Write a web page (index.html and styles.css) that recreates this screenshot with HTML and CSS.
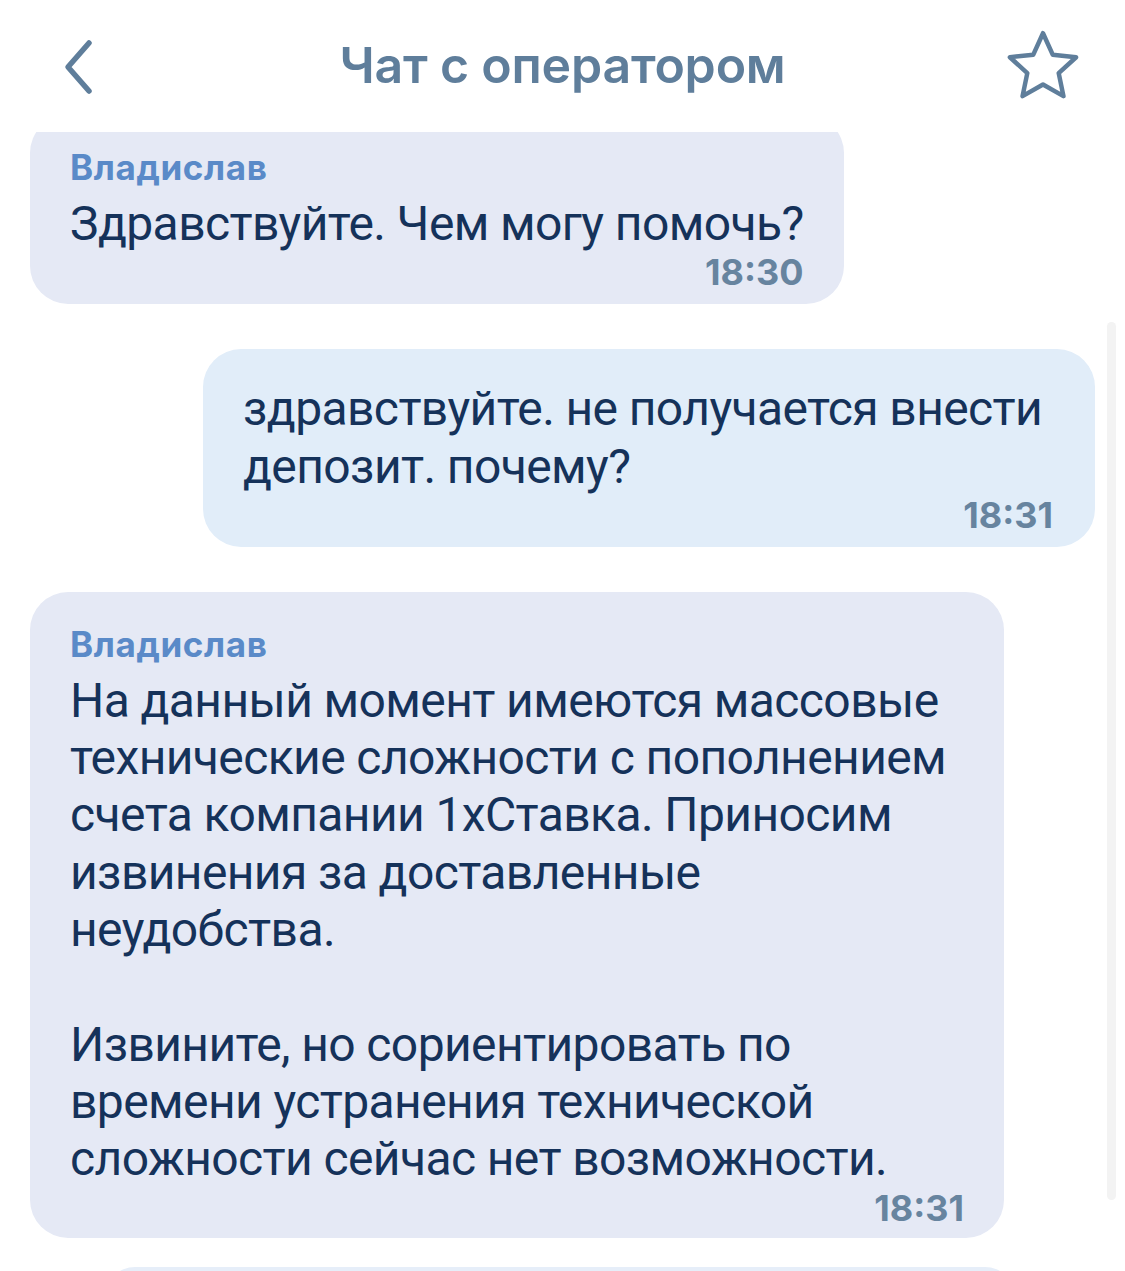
FILE: index.html
```html
<!DOCTYPE html>
<html lang="ru">
<head>
<meta charset="utf-8">
<title>Чат с оператором</title>
<link rel="stylesheet" href="styles.css">
</head>
<body>
<div class="screen">
  <header class="topbar">
    <div class="topbar-left">
      <svg class="icon-back" width="40" height="60" viewBox="0 0 40 60">
        <path d="M31 6 L10 30 L31 54" fill="none" stroke="#5f7e9b" stroke-width="5.5" stroke-linecap="round" stroke-linejoin="round"/>
      </svg>
    </div>
    <h1 class="title">Чат с оператором</h1>
    <div class="topbar-right">
      <svg class="icon-star" width="80" height="80" viewBox="-40 -40 80 80">
        <path d="M0 -34.8 L9.7 -13.35 L33.1 -10.75 L15.7 5.1 L20.45 28.15 L0 16.5 L-20.45 28.15 L-15.7 5.1 L-33.1 -10.75 L-9.7 -13.35 Z" fill="none" stroke="#5f7e9b" stroke-width="4.5" stroke-linejoin="round"/>
      </svg>
    </div>
  </header>
  <main class="chat">
    <div class="messages">
      <div class="bubble bubble-in bubble-first">
        <div class="author">Владислав</div>
        <div class="text">Здравствуйте. Чем могу помочь?</div>
        <div class="time">18:30</div>
      </div>
      <div class="bubble bubble-out">
        <div class="text">здравствуйте. не получается внести депозит. почему?</div>
        <div class="time">18:31</div>
      </div>
      <div class="bubble bubble-in bubble-wide">
        <div class="author">Владислав</div>
        <div class="text">На данный момент имеются массовые технические сложности с пополнением счета компании 1хСтавка. Приносим извинения за доставленные неудобства.<br><br>Извините, но сориентировать по времени устранения технической сложности сейчас нет возможности.</div>
        <div class="time">18:31</div>
      </div>
      <div class="bubble-next"></div>
    </div>
    <div class="scrollbar"></div>
  </main>
</div>
</body>
</html>
```

FILE: styles.css
```css
* { box-sizing: border-box; }
html, body {
  margin: 0;
  padding: 0;
  background: #ffffff;
}
body {
  font-family: "Roboto", "Liberation Sans", sans-serif;
  color: #15325a;
}
.screen {
  width: 1125px;
  height: 1271px;
  display: flex;
  flex-direction: column;
  overflow: hidden;
}
.topbar {
  height: 132px;
  flex: none;
  display: grid;
  grid-template-columns: 1fr auto 1fr;
  align-items: center;
  background: #ffffff;
  position: relative;
  z-index: 2;
}
.topbar-left {
  padding-left: 58px;
  padding-top: 2px;
  display: flex;
}
.topbar-right {
  display: flex;
  justify-content: flex-end;
  padding-right: 42px;
  padding-top: 4px;
}
.title {
  margin: 0;
  font-family: "Inter", "Roboto", sans-serif;
  font-size: 50px;
  font-weight: 600;
  color: #5f7e9b;
  letter-spacing: -0.2px;
  padding-bottom: 2px;
}
.chat {
  flex: 1;
  position: relative;
  overflow: hidden;
}
.messages {
  display: flex;
  flex-direction: column;
  gap: 45px;
  padding: 0 30px;
}
.bubble {
  border-radius: 38px;
  padding: 31px 40px 12px 40px;
}
.bubble-in {
  align-self: flex-start;
  background: #e5e9f5;
  max-width: 974px;
}
.bubble-first {
  margin-top: -17px;
}
.bubble-wide {
  width: 974px;
  padding-bottom: 10px;
}
.bubble-out {
  align-self: flex-end;
  background: #e1edf9;
  width: 892px;
  padding-right: 42px;
}
.author {
  font-family: "Inter", "Roboto", sans-serif;
  font-size: 35px;
  line-height: 42px;
  font-weight: 700;
  letter-spacing: 0.6px;
  color: #5a8ac8;
  margin-bottom: 7px;
}
.text {
  font-size: 48px;
  line-height: 57.3px;
  font-weight: 400;
  letter-spacing: -0.6px;
  color: #15325a;
}
.time {
  text-align: right;
  font-family: "Inter", "Roboto", sans-serif;
  font-size: 36px;
  line-height: 40px;
  font-weight: 700;
  color: #67849f;
}
.bubble-next {
  margin: -16px 80px 0 75px;
  height: 60px;
  border-radius: 30px;
  background: #e6eef9;
}
.scrollbar {
  position: absolute;
  right: 9px;
  top: 190px;
  width: 9px;
  height: 878px;
  border-radius: 5px;
  background: #f3f3f3;
}
```
